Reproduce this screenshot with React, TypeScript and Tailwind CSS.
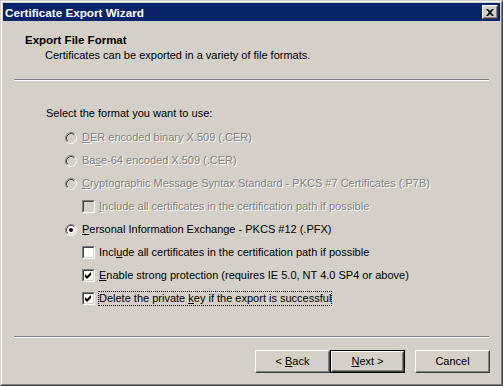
import React from "react";

const Radio: React.FC<{ checked?: boolean; disabled?: boolean }> = ({ checked, disabled }) => (
  <svg width="12" height="12" viewBox="0 0 12 12" className="shrink-0">
    <circle cx="6" cy="6" r="5" fill={disabled ? "#d4d0c8" : "#ffffff"} />
    <path d="M2.11 9.89 A5.5 5.5 0 0 1 9.89 2.11" fill="none" stroke="#808080" strokeWidth="1" />
    <path d="M9.89 2.11 A5.5 5.5 0 0 1 2.11 9.89" fill="none" stroke="#ffffff" strokeWidth="1" />
    <path d="M2.82 9.18 A4.5 4.5 0 0 1 9.18 2.82" fill="none" stroke="#404040" strokeWidth="1" />
    <path d="M9.18 2.82 A4.5 4.5 0 0 1 2.82 9.18" fill="none" stroke="#d4d0c8" strokeWidth="1" />
    {checked && <circle cx="6" cy="6" r="2" fill="#000000" />}
  </svg>
);

const Check: React.FC<{ checked?: boolean; disabled?: boolean }> = ({ checked, disabled }) => (
  <div className="w-[13px] h-[13px] shrink-0 border border-t-[#808080] border-l-[#808080] border-r-white border-b-white">
    <div
      className={`w-full h-full border border-t-[#404040] border-l-[#404040] border-r-[#d4d0c8] border-b-[#d4d0c8] ${
        disabled ? "bg-[#d4d0c8]" : "bg-white"
      }`}
    >
      {checked && (
        <svg width="9" height="9" viewBox="0 0 9 9">
          <polygon points="1,3 3,5 7,1 7,4 3,8 1,6" fill="#000000" />
        </svg>
      )}
    </div>
  </div>
);

const Btn: React.FC<{ children: React.ReactNode; isDefault?: boolean }> = ({ children, isDefault }) => (
  <div className={`w-[75px] h-[23px] ${isDefault ? "border border-black" : ""}`}>
    <div className="w-full h-full border border-t-white border-l-white border-r-[#404040] border-b-[#404040]">
      <div className="w-full h-full border border-t-[#d4d0c8] border-l-[#d4d0c8] border-r-[#808080] border-b-[#808080] flex items-center justify-center text-black">
        {children}
      </div>
    </div>
  </div>
);

const dis = "text-[#808080] [text-shadow:1px_1px_0_#ffffff]";

const App: React.FC = () => {
  return (
    <div className="w-[503px] h-[386px] font-['Liberation_Sans',Arial,sans-serif] text-[11px] leading-[13px] text-black bg-[#d4d0c8] border border-t-[#d4d0c8] border-l-[#d4d0c8] border-r-[#404040] border-b-[#404040]">
      <div className="w-full h-full border border-t-white border-l-white border-r-[#808080] border-b-[#808080] p-px">
        {/* Title bar */}
        <div className="h-[18px] bg-[#0a246a] flex items-center justify-between pl-[2px] pr-[2px]">
          <span className="text-white font-bold text-[11.7px]">Certificate Export Wizard</span>
          <div className="w-4 h-[14px] border border-t-white border-l-white border-r-[#404040] border-b-[#404040] bg-[#d4d0c8]">
            <div className="w-full h-full border border-t-[#d4d0c8] border-l-[#d4d0c8] border-r-[#808080] border-b-[#808080] flex items-center justify-center">
              <svg width="8" height="7" viewBox="0 0 8 7">
                <path d="M0 0h2l2 2 2-2h2L5 3.5 8 7H6L4 5 2 7H0l3-3.5z" fill="#000" />
              </svg>
            </div>
          </div>
        </div>

        {/* Header */}
        <div className="pt-[13px] pl-[22px] font-bold text-[11.5px]">Export File Format</div>
        <div className="mt-[2px] pl-[42px]">Certificates can be exported in a variety of file formats.</div>
        <div className="mt-[17px] mx-[11px] border-t border-t-[#808080] border-b border-b-white" />

        {/* Body */}
        <div className="mt-[26px] pl-[43px]">Select the format you want to use:</div>
        <div className="mt-[6px] pl-[62px] flex flex-col">
          <div className="h-[23px] flex items-center gap-[5px]">
            <Radio disabled />
            <span className={dis}>
              <u>D</u>ER encoded binary X.509 (.CER)
            </span>
          </div>
          <div className="h-[23px] flex items-center gap-[5px]">
            <Radio disabled />
            <span className={dis}>
              Ba<u>s</u>e-64 encoded X.509 (.CER)
            </span>
          </div>
          <div className="h-[23px] flex items-center gap-[5px]">
            <Radio disabled />
            <span className={dis}>
              <u>C</u>ryptographic Message Syntax Standard - PKCS #7 Certificates (.P7B)
            </span>
          </div>
          <div className="h-[23px] flex items-center gap-[4px] pl-[17px]">
            <Check disabled />
            <span className={dis}>
              <u>I</u>nclude all certificates in the certification path if possible
            </span>
          </div>
          <div className="h-[23px] flex items-center gap-[5px]">
            <Radio checked />
            <span>
              <u>P</u>ersonal Information Exchange - PKCS #12 (.PFX)
            </span>
          </div>
          <div className="h-[23px] flex items-center gap-[4px] pl-[17px]">
            <Check />
            <span>
              Incl<u>u</u>de all certificates in the certification path if possible
            </span>
          </div>
          <div className="h-[23px] flex items-center gap-[4px] pl-[17px]">
            <Check checked />
            <span>
              <u>E</u>nable strong protection (requires IE 5.0, NT 4.0 SP4 or above)
            </span>
          </div>
          <div className="h-[23px] flex items-center gap-[4px] pl-[17px]">
            <Check checked />
            <span className="outline outline-1 outline-dotted outline-black">
              Delete the private <u>k</u>ey if the export is successful
            </span>
          </div>
        </div>

        <div className="mt-[26px] mx-[11px] border-t border-t-[#808080] border-b border-b-white" />

        {/* Buttons */}
        <div className="mt-[12px] pr-[10px] flex justify-end items-center">
          <Btn>
            &lt; <u className="ml-[3px]">B</u>ack
          </Btn>
          <Btn isDefault>
            <u>N</u>ext &gt;
          </Btn>
          <div className="w-[10px]" />
          <Btn>Cancel</Btn>
        </div>
      </div>
    </div>
  );
};

export default App;
